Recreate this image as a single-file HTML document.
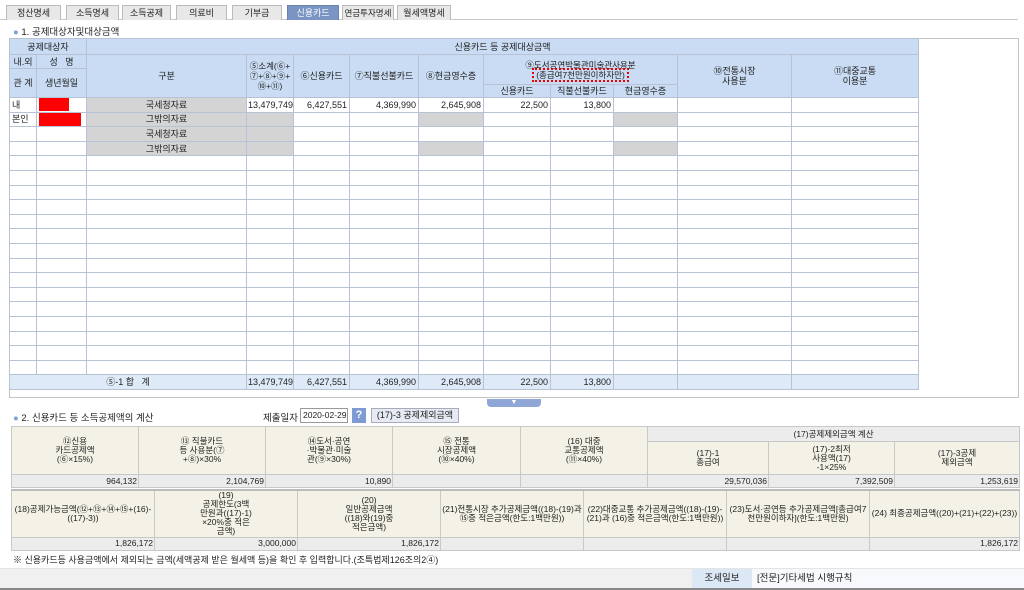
<!DOCTYPE html>
<html><head><meta charset="utf-8">
<style>
*{margin:0;padding:0;box-sizing:border-box}
body{width:1024px;height:590px;background:#fff;position:relative;overflow:hidden;font-family:"Liberation Sans","Noto Sans CJK KR","NanumGothic",sans-serif;font-size:9px;color:#222}
.a{position:absolute;white-space:nowrap}
.tab{position:absolute;top:5px;height:15px;background:#e8e8e8;border:1px solid #bbb;border-bottom:none;text-align:center;line-height:14px;font-size:9px;color:#222;white-space:nowrap;overflow:hidden}
.tab.on{background:#7a95c4;color:#fff;border-color:#6a84b2}
table{border-collapse:collapse;table-layout:fixed;position:absolute}
td{border:1px solid #b7c2d4;overflow:hidden;white-space:nowrap;padding:0 2px;line-height:10px}
.t1 tr.d td{height:14.6px}
.h{background:#c9dcf3;text-align:center}
.g{background:#d4d4d4;text-align:center}
.r{text-align:right}
.tot td{background:#deeaf8}
.t2 td{border:1px solid #c8c8c8;text-align:center;white-space:normal;line-height:9px;font-size:8.5px;padding:0 1px}
.y{background:#f4f2e6}
.v{background:#ececec;text-align:right!important;height:13px}
.gh{background:#ececec}
</style></head><body>
<div class="a" style="left:0;top:19px;width:1018px;border-top:1px solid #c8c8c8"></div>
<div class="tab" style="left:6px;width:55px">정산명세</div>
<div class="tab" style="left:66px;width:53px">소득명세</div>
<div class="tab" style="left:122px;width:49px">소득공제</div>
<div class="tab" style="left:176px;width:51px">의료비</div>
<div class="tab" style="left:232px;width:50px">기부금</div>
<div class="tab on" style="left:287px;width:52px">신용카드</div>
<div class="tab" style="left:342px;width:52px;font-size:8.5px">연금투자명세</div>
<div class="tab" style="left:397px;width:54px">월세액명세</div>

<div class="a" style="left:13px;top:24px;font-size:9.5px"><span style="color:#7fa3d6">●</span> 1. 공제대상자및대상금액</div>

<div class="a" style="left:9px;top:38px;width:1010px;height:360px;border:1px solid #c4c4c4"></div>

<table class="t1" style="left:9px;top:38px;width:909px">
<colgroup><col style="width:27px"><col style="width:50px"><col style="width:160px"><col style="width:47px"><col style="width:56px"><col style="width:69px"><col style="width:65px"><col style="width:67px"><col style="width:63px"><col style="width:64px"><col style="width:114px"><col style="width:127px"></colgroup>
<tr style="height:16px"><td class="h" colspan="2">공제대상자</td><td class="h" colspan="10">신용카드 등 공제대상금액</td></tr>
<tr style="height:14px"><td class="h">내.외</td><td class="h">성 &nbsp; 명</td><td class="h" rowspan="3">구분</td><td class="h" rowspan="3" style="white-space:normal;font-size:8.5px;line-height:10px;padding:0">⑤소계(⑥+<br>⑦+⑧+⑨+<br>⑩+⑪)</td><td class="h" rowspan="3">⑥신용카드</td><td class="h" rowspan="3">⑦직불선불카드</td><td class="h" rowspan="3">⑧현금영수증</td><td class="h" colspan="3" rowspan="2" style="line-height:10px;font-size:8.5px">⑨도서공연박물관미술관사용분<br><span style="outline:2px dotted #e00;padding:0 2px">(총급여7천만원이하자만)</span></td><td class="h" rowspan="3">⑩전통시장<br>사용분</td><td class="h" rowspan="3">⑪대중교통<br>이용분</td></tr>
<tr style="height:16px"><td class="h" rowspan="2">관 계</td><td class="h" rowspan="2">생년월일</td></tr>
<tr style="height:13px"><td class="h">신용카드</td><td class="h">직불선불카드</td><td class="h">현금영수증</td></tr>
<tr class="d"><td>내</td><td><div style="width:30px;height:13px;background:#f00"></div></td><td class="g">국세청자료</td><td class="r" style="padding:0 1px">13,479,749</td><td class="r">6,427,551</td><td class="r">4,369,990</td><td class="r">2,645,908</td><td class="r">22,500</td><td class="r">13,800</td><td></td><td></td><td></td></tr>
<tr class="d"><td>본인</td><td><div style="width:42px;height:13px;background:#f00"></div></td><td class="g">그밖의자료</td><td class="g"></td><td></td><td></td><td class="g"></td><td></td><td></td><td class="g"></td><td></td><td></td></tr>
<tr class="d"><td></td><td></td><td class="g">국세청자료</td><td class="g"></td><td></td><td></td><td></td><td></td><td></td><td></td><td></td><td></td></tr>
<tr class="d"><td></td><td></td><td class="g">그밖의자료</td><td class="g"></td><td></td><td></td><td class="g"></td><td></td><td></td><td class="g"></td><td></td><td></td></tr>
<tr class="d"><td></td><td></td><td></td><td></td><td></td><td></td><td></td><td></td><td></td><td></td><td></td><td></td></tr>
<tr class="d"><td></td><td></td><td></td><td></td><td></td><td></td><td></td><td></td><td></td><td></td><td></td><td></td></tr>
<tr class="d"><td></td><td></td><td></td><td></td><td></td><td></td><td></td><td></td><td></td><td></td><td></td><td></td></tr>
<tr class="d"><td></td><td></td><td></td><td></td><td></td><td></td><td></td><td></td><td></td><td></td><td></td><td></td></tr>
<tr class="d"><td></td><td></td><td></td><td></td><td></td><td></td><td></td><td></td><td></td><td></td><td></td><td></td></tr>
<tr class="d"><td></td><td></td><td></td><td></td><td></td><td></td><td></td><td></td><td></td><td></td><td></td><td></td></tr>
<tr class="d"><td></td><td></td><td></td><td></td><td></td><td></td><td></td><td></td><td></td><td></td><td></td><td></td></tr>
<tr class="d"><td></td><td></td><td></td><td></td><td></td><td></td><td></td><td></td><td></td><td></td><td></td><td></td></tr>
<tr class="d"><td></td><td></td><td></td><td></td><td></td><td></td><td></td><td></td><td></td><td></td><td></td><td></td></tr>
<tr class="d"><td></td><td></td><td></td><td></td><td></td><td></td><td></td><td></td><td></td><td></td><td></td><td></td></tr>
<tr class="d"><td></td><td></td><td></td><td></td><td></td><td></td><td></td><td></td><td></td><td></td><td></td><td></td></tr>
<tr class="d"><td></td><td></td><td></td><td></td><td></td><td></td><td></td><td></td><td></td><td></td><td></td><td></td></tr>
<tr class="d"><td></td><td></td><td></td><td></td><td></td><td></td><td></td><td></td><td></td><td></td><td></td><td></td></tr>
<tr class="d"><td></td><td></td><td></td><td></td><td></td><td></td><td></td><td></td><td></td><td></td><td></td><td></td></tr>
<tr class="d"><td></td><td></td><td></td><td></td><td></td><td></td><td></td><td></td><td></td><td></td><td></td><td></td></tr>
<tr class="tot d"><td colspan="3" style="text-align:center">⑤-1 합 &nbsp; 계</td><td class="r" style="padding:0 1px">13,479,749</td><td class="r">6,427,551</td><td class="r">4,369,990</td><td class="r">2,645,908</td><td class="r">22,500</td><td class="r">13,800</td><td></td><td></td><td></td></tr>
</table>

<div class="a" style="left:487px;top:399px;width:54px;height:8px;background:#8fa6d6;border-radius:0 0 4px 4px;color:#fff;font-size:7px;text-align:center;line-height:8px">▼</div>

<div class="a" style="left:13px;top:410px;font-size:9.5px"><span style="color:#7fa3d6">●</span> 2. 신용카드 등 소득공제액의 계산</div>
<div class="a" style="left:263px;top:410px;font-size:9.5px">제출일자</div>
<div class="a" style="left:300px;top:408px;width:48px;height:15px;border:1px solid #999;font-size:8.5px;line-height:13px;padding-left:2px;overflow:hidden">2020-02-29</div>
<div class="a" style="left:352px;top:408px;width:14px;height:15px;background:#7f9bd4;color:#fff;font-weight:bold;text-align:center;line-height:15px;font-size:11px">?</div>
<div class="a" style="left:371px;top:408px;width:88px;height:15px;background:#e6ebf3;border:1px solid #aab;text-align:center;line-height:13px;font-size:9px">(17)-3 공제제외금액</div>

<table class="t2" style="left:11px;top:426px;width:1008px">
<colgroup><col style="width:127px"><col style="width:127px"><col style="width:127px"><col style="width:128px"><col style="width:127px"><col style="width:121px"><col style="width:126px"><col style="width:125px"></colgroup>
<tr><td class="y" rowspan="2" style="height:48px">⑫신용<br>카드공제액<br>(⑥×15%)</td><td class="y" rowspan="2">⑬ 직불카드<br>등 사용분(⑦<br>+⑧)×30%</td><td class="y" rowspan="2">⑭도서·공연<br>·박물관·미술<br>관(⑨×30%)</td><td class="y" rowspan="2">⑮ 전통<br>시장공제액<br>(⑩×40%)</td><td class="y" rowspan="2">(16) 대중<br>교통공제액<br>(⑪×40%)</td><td class="gh" colspan="3" style="height:15px">(17)공제제외금액 계산</td></tr>
<tr><td class="y" style="height:33px">(17)-1<br>총급여</td><td class="y">(17)-2최저<br>사용액(17)<br>-1×25%</td><td class="y">(17)-3공제<br>제외금액</td></tr>
<tr><td class="v">964,132</td><td class="v">2,104,769</td><td class="v">10,890</td><td class="v"></td><td class="v"></td><td class="v">29,570,036</td><td class="v">7,392,509</td><td class="v">1,253,619</td></tr>
</table>
<table class="t2" style="left:11px;top:489px;width:1008px;border-top:2px solid #bbb">
<colgroup><col style="width:143px"><col style="width:143px"><col style="width:143px"><col style="width:143px"><col style="width:143px"><col style="width:143px"><col style="width:150px"></colgroup>
<tr><td class="y" style="height:47px">(18)공제가능금액(⑫+⑬+⑭+⑮+(16)-((17)-3))</td><td class="y" style="line-height:9px">(19)<br>공제한도(3백<br>만원과((17)-1)<br>×20%중 적은<br>금액)</td><td class="y">(20)<br>일반공제금액<br>((18)와(19)중<br>적은금액)</td><td class="y">(21)전통시장 추가공제금액((18)-(19)과 ⑮중 적은금액(한도:1백만원))</td><td class="y">(22)대중교통 추가공제금액((18)-(19)-(21)과 (16)중 적은금액(한도:1백만원))</td><td class="y">(23)도서·공연등 추가공제금액[총급여7천만원이하자](한도:1백만원)</td><td class="y">(24) 최종공제금액((20)+(21)+(22)+(23))</td></tr>
<tr><td class="v">1,826,172</td><td class="v">3,000,000</td><td class="v">1,826,172</td><td class="v"></td><td class="v"></td><td class="v"></td><td class="v">1,826,172</td></tr>
</table>
<div class="a" style="left:13px;top:553px;font-size:9px">※ 신용카드등 사용금액에서 제외되는 금액(세액공제 받은 월세액 등)을 확인 후 입력합니다.(조특법제126조의2④)</div>

<div class="a" style="left:0;top:568px;width:1024px;height:22px;background:#f0f0f0;border-top:1px solid #e4e4e4;border-bottom:2px solid #888"></div>
<div class="a" style="left:692px;top:569px;width:60px;height:19px;background:#dde8f6;text-align:center;line-height:19px;font-size:9.5px">조세일보</div>
<div class="a" style="left:752px;top:569px;width:272px;height:19px;background:#f8f9fc;line-height:19px;font-size:9.5px;padding-left:5px">[전문]기타세법 시행규칙</div>
</body></html>
